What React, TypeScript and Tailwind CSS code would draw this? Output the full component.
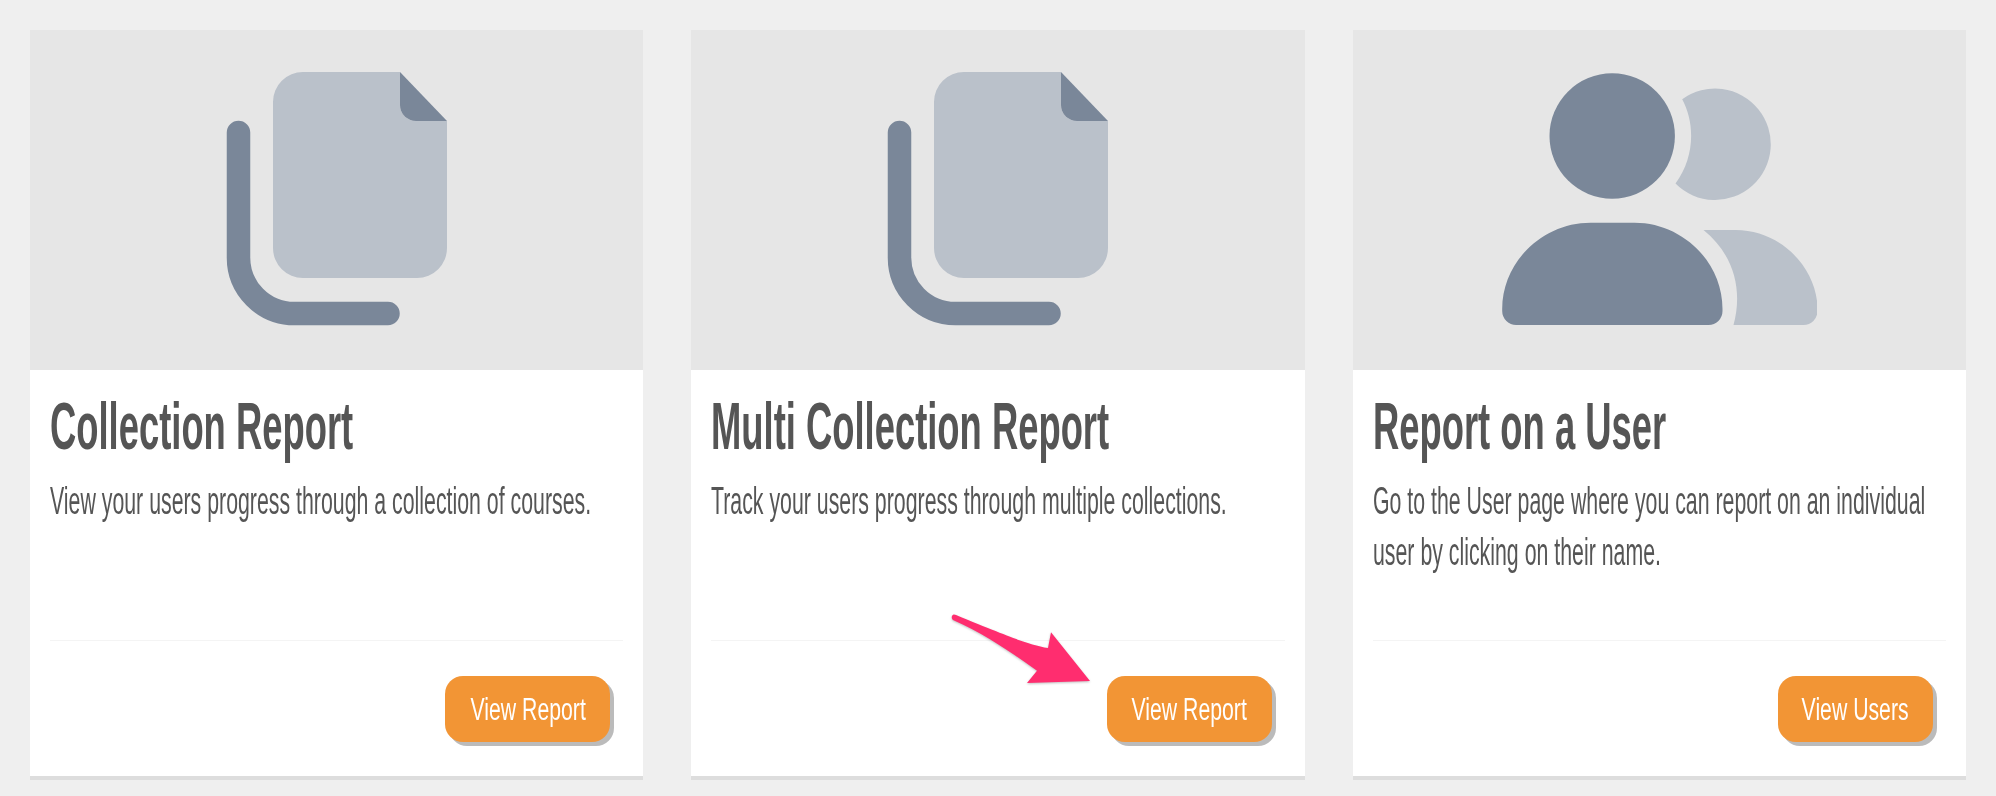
const DARK = '#7a8799';
const LIGHT = '#bac1ca';

const DocsIcon = () => (
  <svg width="222" height="254" viewBox="226 72 222 254">
    <path
      d="M303 72H400V105A16 16 0 0 0 416 121H447V248A30 30 0 0 1 417 278H303A30 30 0 0 1 273 248V102A30 30 0 0 1 303 72Z"
      fill={LIGHT}
    />
    <path d="M400 72L447 121H416A16 16 0 0 1 400 105Z" fill={DARK} />
    <path
      d="M238.500 132.500V257A56 56 0 0 0 294.500 313.500H388"
      fill="none"
      stroke={DARK}
      strokeWidth="23.500"
      strokeLinecap="round"
    />
  </svg>
);

const UsersIcon = () => (
  <svg width="316" height="254" viewBox="1500.500 72 316 254">
    <circle cx="1611.700" cy="136" r="62.700" fill={DARK} />
    <path
      d="M1501.700 309C1501.700 262 1542 222.700 1590 222.700H1634C1682 222.700 1722 262 1722 309V311A14 14 0 0 1 1708 325H1516A14 14 0 0 1 1501.700 311Z"
      fill={DARK}
    />
    <path
      d="M1681.700 99.300A55.700 55.700 0 1 1 1675 183.500C1694 158 1695 124 1681.700 99.300Z"
      fill={LIGHT}
    />
    <path
      d="M1703 230H1735C1782 230 1817 270 1817 309V311A14 14 0 0 1 1803 325H1733C1742 292 1735 256 1703 230Z"
      fill={LIGHT}
    />
  </svg>
);

const cards = [
  {
    title: 'Collection Report',
    lines: ['View your users progress through a collection of courses.'],
    button: 'View Report',
    buttonWidth: 'w-[165px]',
    icon: <DocsIcon />,
    arrow: false,
  },
  {
    title: 'Multi Collection Report',
    lines: ['Track your users progress through multiple collections.'],
    button: 'View Report',
    buttonWidth: 'w-[165px]',
    icon: <DocsIcon />,
    arrow: true,
  },
  {
    title: 'Report on a User',
    lines: [
      'Go to the User page where you can report on an individual',
      'user by clicking on their name.',
    ],
    button: 'View Users',
    buttonWidth: 'w-[155px]',
    icon: <UsersIcon />,
    arrow: false,
  },
];

const Arrow = () => (
  <svg
    className="absolute left-[255px] top-[580px] drop-shadow-[0_1px_1px_rgba(0,0,0,0.25)]"
    width="150"
    height="80"
    viewBox="946 610 150 80"
  >
    <path
      d="M954 614.500C951 615 951 619 954 620.500C985 634 1012 653 1037 670.700L1027 683L1090 681L1051 632.300L1048 648C1030 645 1012 638 956 615Z"
      fill="#ff2d6f"
    />
  </svg>
);

export default function App() {
  return (
    <div className="grid min-h-[796px] grid-cols-3 items-start gap-12 bg-[#efefef] px-[30px] pt-[30px] font-['Liberation_Sans',sans-serif]">
      {cards.map((card) => (
        <div
          key={card.title}
          className="relative flex h-[746px] flex-col bg-white shadow-[0_4px_0_#dddddd]"
        >
          <div className="flex h-[340px] justify-center bg-[#e6e6e6] pt-[42px]">
            {card.icon}
          </div>
          <div className="flex-1 px-[20px] pt-[11px] text-[#555555]">
            <h2 className="origin-left scale-x-[0.543] whitespace-nowrap text-[67px] font-bold leading-[90px]">
              {card.title}
            </h2>
            <div className="mt-[5px]">
              {card.lines.map((line) => (
                <p
                  key={line}
                  className="origin-left scale-x-[0.561] whitespace-nowrap text-[38px] leading-[51px]"
                >
                  {line}
                </p>
              ))}
            </div>
          </div>
          <div className="mx-[20px] flex h-[136px] justify-end border-t border-[#f4f4f4] pr-[13px] pt-[35px]">
            <button
              className={`flex h-[66px] items-center justify-center rounded-[18px] bg-[#f29535] pt-[2px] text-white shadow-[4px_4px_0_#bbbbbb] ${card.buttonWidth}`}
            >
              <span className="scale-x-[0.685] whitespace-nowrap text-[31px]">
                {card.button}
              </span>
            </button>
          </div>
          {card.arrow && <Arrow />}
        </div>
      ))}
    </div>
  );
}
